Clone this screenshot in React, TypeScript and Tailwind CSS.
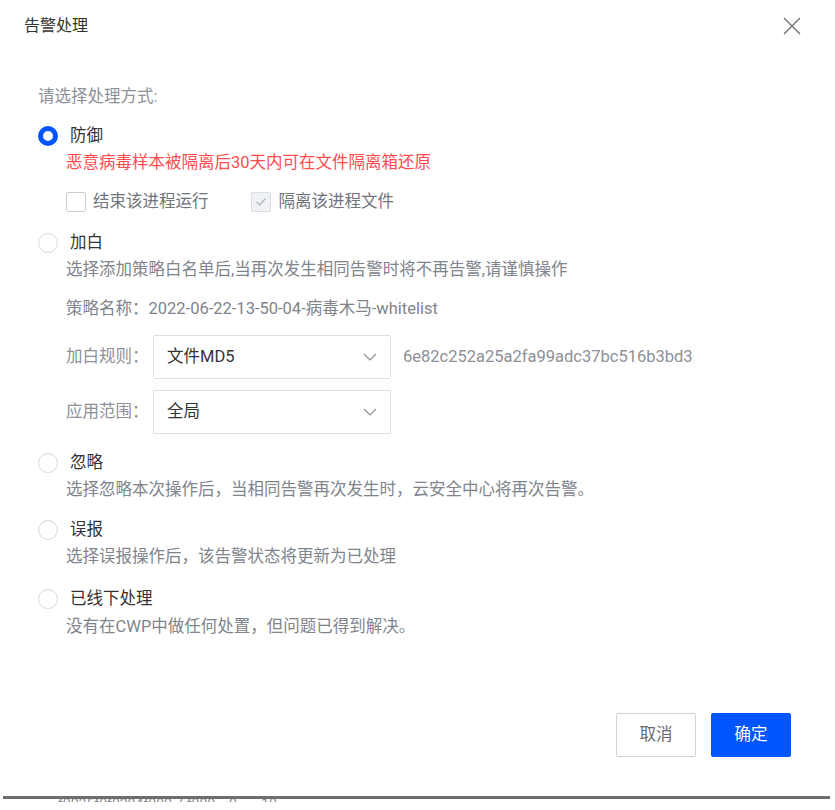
import React from "react";

function Radio({ checked }: { checked?: boolean }) {
  return checked ? (
    <span className="box-border block h-[20px] w-[20px] shrink-0 rounded-full border-[5px] border-[#0055ff] bg-white" />
  ) : (
    <span className="box-border block h-[20px] w-[20px] shrink-0 rounded-full border border-[#d5d8de] bg-white" />
  );
}

function Chevron() {
  return (
    <svg width="16" height="10" viewBox="0 0 16 10" fill="none">
      <path d="M2 2 L8 8 L14 2" stroke="#8c9098" strokeWidth="1.2" />
    </svg>
  );
}

function Select({ value }: { value: string }) {
  return (
    <div className="flex h-[44px] w-[238px] items-center justify-between rounded-[2px] border border-[#dcdfe5] bg-white pl-[13px] pr-[12px]">
      <span className="text-[#333]">{value}</span>
      <Chevron />
    </div>
  );
}

export default function App() {
  return (
    <div className="relative flex h-[810px] w-[835px] flex-col bg-white font-['Roboto','Noto_Sans_CJK_SC',sans-serif] text-[16.5px] leading-[22px]">
      {/* header */}
      <div className="flex h-[52px] items-center justify-between pl-[24px] pr-[34px]">
        <span className="text-[16px] text-[#333]">告警处理</span>
        <svg width="18" height="18" viewBox="0 0 18 18" fill="none">
          <path d="M1 1 L17 17 M17 1 L1 17" stroke="#6b7078" strokeWidth="1.4" />
        </svg>
      </div>

      {/* body */}
      <div className="flex flex-col pl-[38px] pt-[34px]">
        <div className="text-[#8c9099]">请选择处理方式:</div>

        <div className="mt-[17px] flex items-center gap-[12px]">
          <Radio checked />
          <span className="text-[#333]">防御</span>
        </div>
        <div className="mt-[5px] pl-[28px] text-[#ff4d4f]">恶意病毒样本被隔离后30天内可在文件隔离箱还原</div>

        <div className="mt-[18px] flex h-[20px] items-center pl-[28px]">
          <span className="box-border block h-[20px] w-[20px] rounded-[2px] border border-[#c9ccd2] bg-white" />
          <span className="ml-[7px] text-[#70747c]">结束该进程运行</span>
          <span className="ml-[42px] box-border flex h-[20px] w-[20px] items-center justify-center rounded-[2px] border border-[#d9dce1] bg-[#f0f1f4]">
            <svg width="12" height="10" viewBox="0 0 12 10" fill="none">
              <path d="M1.5 5 L4.5 8 L10.5 1.5" stroke="#b5b9c0" strokeWidth="1.4" />
            </svg>
          </span>
          <span className="ml-[8px] text-[#70747c]">隔离该进程文件</span>
        </div>

        <div className="mt-[20px] flex items-center gap-[12px]">
          <Radio />
          <span className="text-[#333]">加白</span>
        </div>
        <div className="mt-[5px] pl-[28px] text-[#80848c]">选择添加策略白名单后,当再次发生相同告警时将不再告警,请谨慎操作</div>
        <div className="mt-[17px] pl-[28px] text-[#80848c]">策略名称：2022-06-22-13-50-04-病毒木马-whitelist</div>

        <div className="mt-[15px] flex items-center pl-[28px]">
          <span className="w-[87px] text-[#8c9099]">加白规则：</span>
          <Select value="文件MD5" />
          <span className="ml-[12px] text-[#8c9099]">6e82c252a25a2fa99adc37bc516b3bd3</span>
        </div>
        <div className="mt-[11px] flex items-center pl-[28px]">
          <span className="w-[87px] text-[#8c9099]">应用范围：</span>
          <Select value="全局" />
        </div>

        <div className="mt-[18px] flex items-center gap-[12px]">
          <Radio />
          <span className="text-[#333]">忽略</span>
        </div>
        <div className="mt-[5px] pl-[28px] text-[#80848c]">选择忽略本次操作后，当相同告警再次发生时，云安全中心将再次告警。</div>

        <div className="mt-[18px] flex items-center gap-[12px]">
          <Radio />
          <span className="text-[#333]">误报</span>
        </div>
        <div className="mt-[5px] pl-[28px] text-[#80848c]">选择误报操作后，该告警状态将更新为已处理</div>

        <div className="mt-[20px] flex items-center gap-[12px]">
          <Radio />
          <span className="text-[#333]">已线下处理</span>
        </div>
        <div className="mt-[6px] pl-[28px] text-[#80848c]">没有在CWP中做任何处置，但问题已得到解决。</div>
      </div>

      {/* footer */}
      <div className="mt-[75px] flex justify-end gap-[15px] pr-[44px]">
        <button className="h-[44px] w-[80px] rounded-[2px] border border-[#cfd2d8] bg-white text-[#666a72]">取消</button>
        <button className="h-[44px] w-[80px] rounded-[2px] bg-[#0055ff] text-white">确定</button>
      </div>

      <div className="mt-[39px] ml-[3px] h-[3px] w-[827px] bg-[#6e6e6e]" />
      <div className="ml-[58px] h-[3px] overflow-hidden">
        <div className="-mt-[3px] text-[14px] leading-[16px] text-[#8a8a8a]">f0035f0f0294f000 7 f000 &nbsp;&nbsp; 0 &nbsp;&nbsp;&nbsp;&nbsp;&nbsp; 10</div>
      </div>
    </div>
  );
}
